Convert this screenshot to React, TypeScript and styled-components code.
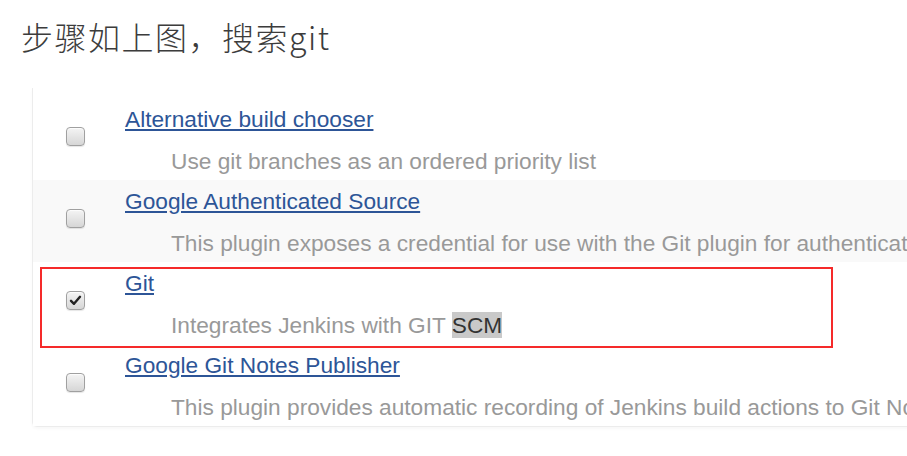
import React from "react";
import styled, { createGlobalStyle } from "styled-components";

const GlobalStyle = createGlobalStyle`
  html, body {
    margin: 0;
    padding: 0;
    background: #ffffff;
    overflow: hidden;
  }
  body {
    width: 907px;
    height: 456px;
  }
`;

const Page = styled.div`
  width: 907px;
  height: 456px;
  overflow: hidden;
  display: flex;
  flex-direction: column;
`;

const Title = styled.h1`
  margin: 0;
  padding: 14px 0 0 21px;
  height: 74px;
  box-sizing: border-box;
  font-family: "Noto Sans CJK SC", "Noto Sans", sans-serif;
  font-weight: 300;
  font-size: 32px;
  letter-spacing: 1.5px;
  line-height: 44px;
  color: #3c3c3c;
`;

const Panel = styled.div`
  margin-left: 32px;
  margin-top: 14px;
  width: 1000px;
  padding-top: 10px;
  border-left: 1px solid #ececec;
  border-bottom: 1px solid #ececec;
  border-bottom-left-radius: 5px;
  box-shadow: 0 2px 3px rgba(0, 0, 0, 0.03);
  display: flex;
  flex-direction: column;
`;

const Row = styled.div<{ $shaded?: boolean }>`
  position: relative;
  display: flex;
  height: 82px;
  box-sizing: border-box;
  background: ${(p) => (p.$shaded ? "#f9f9f9" : "#ffffff")};
`;

const CheckCell = styled.div`
  width: 92px;
  flex: none;
  box-sizing: border-box;
  padding-left: 33px;
  padding-bottom: 6px;
  display: flex;
  align-items: center;
`;

const Box = styled.span`
  width: 19px;
  height: 19px;
  box-sizing: border-box;
  border: 1px solid #a0a0a0;
  border-radius: 4px;
  background: linear-gradient(#f4f4f4, #d6d6d6);
  box-shadow: inset 0 1px 1px rgba(255, 255, 255, 0.8), 0 1px 1px rgba(0, 0, 0, 0.1);
  display: flex;
  align-items: center;
  justify-content: center;
`;

const Content = styled.div`
  display: flex;
  flex-direction: column;
  padding-top: 8px;
  gap: 16px;
  font-family: "Liberation Sans", Arial, sans-serif;
  font-size: 22.7px;
  line-height: 26px;
  white-space: nowrap;
`;

const PluginLink = styled.a`
  color: #2d5597;
  text-decoration: underline;
  text-underline-offset: 2px;
  cursor: pointer;
  align-self: flex-start;
`;

const Desc = styled.div`
  padding-left: 46px;
  color: #999999;
`;

const Mark = styled.span`
  background: #c9c9c9;
  color: #333333;
`;

const Highlight = styled.div`
  position: absolute;
  z-index: 2;
  left: 7px;
  top: 5px;
  width: 793px;
  height: 81px;
  box-sizing: border-box;
  border: 2px solid #f52a2a;
  pointer-events: none;
`;

function Checkbox({ checked }: { checked?: boolean }) {
  return (
    <Box>
      {checked && (
        <svg width="13" height="13" viewBox="0 0 13 13">
          <path
            d="M2 6.8 L5 9.8 L11 2.8"
            fill="none"
            stroke="#222"
            strokeWidth="2.4"
            strokeLinecap="round"
            strokeLinejoin="round"
          />
        </svg>
      )}
    </Box>
  );
}

type Plugin = {
  name: string;
  desc: React.ReactNode;
  checked?: boolean;
  shaded?: boolean;
  highlighted?: boolean;
};

const plugins: Plugin[] = [
  { name: "Alternative build chooser", desc: "Use git branches as an ordered priority list" },
  {
    name: "Google Authenticated Source",
    desc: "This plugin exposes a credential for use with the Git plugin for authenticating with Google Cloud Source",
    shaded: true,
  },
  {
    name: "Git",
    desc: (
      <>
        Integrates Jenkins with GIT <Mark>SCM</Mark>
      </>
    ),
    checked: true,
    highlighted: true,
  },
  {
    name: "Google Git Notes Publisher",
    desc: "This plugin provides automatic recording of Jenkins build actions to Git Notes",
  },
];

export default function App() {
  return (
    <>
      <GlobalStyle />
      <Page>
        <Title>步骤如上图，搜索git</Title>
        <Panel>
          {plugins.map((p) => (
            <Row key={p.name} $shaded={p.shaded}>
              <CheckCell>
                <Checkbox checked={p.checked} />
              </CheckCell>
              <Content>
                <PluginLink>{p.name}</PluginLink>
                <Desc>{p.desc}</Desc>
              </Content>
              {p.highlighted && <Highlight />}
            </Row>
          ))}
        </Panel>
      </Page>
    </>
  );
}
